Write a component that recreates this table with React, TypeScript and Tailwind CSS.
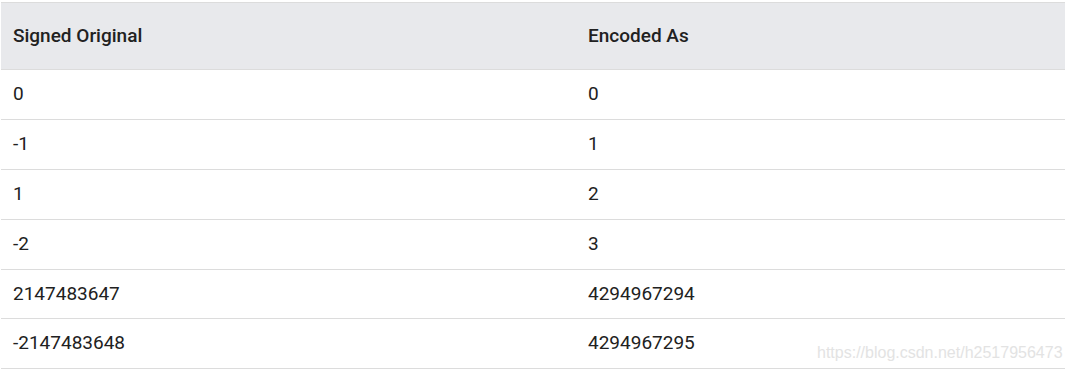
const rows: [string, string, string][] = [
  ["0", "0", "h-[50px]"],
  ["-1", "1", "h-[50px]"],
  ["1", "2", "h-[50px]"],
  ["-2", "3", "h-[50px]"],
  ["2147483647", "4294967294", "h-[49px]"],
  ["-2147483648", "4294967295", "h-[50px]"],
];

export default function App() {
  return (
    <div className="w-[1070px] h-[370px] bg-white pt-[2px] pl-[1px] font-['Roboto',sans-serif] text-[19px] text-[#212121] relative">
      <table className="w-[1064px] border-collapse table-fixed">
        <thead>
          <tr className="h-[67px] bg-[#e8e9ec] border-t border-b border-[#dcdcdc]">
            <th className="w-[575px] text-left font-medium pl-3 text-[19px]">Signed Original</th>
            <th className="text-left font-medium pl-3 text-[19px]">Encoded As</th>
          </tr>
        </thead>
        <tbody>
          {rows.map(([a, b, h], i) => (
            <tr key={i} className={`${h} border-b border-[#dcdcdc]`}>
              <td className="pl-3">{a}</td>
              <td className="pl-3">{b}</td>
            </tr>
          ))}
        </tbody>
      </table>
      <span className="absolute left-[817px] top-[341px] text-[16px] text-[#e3e3e3] font-['Liberation_Sans',sans-serif]">
        https://blog.csdn.net/h2517956473
      </span>
    </div>
  );
}
